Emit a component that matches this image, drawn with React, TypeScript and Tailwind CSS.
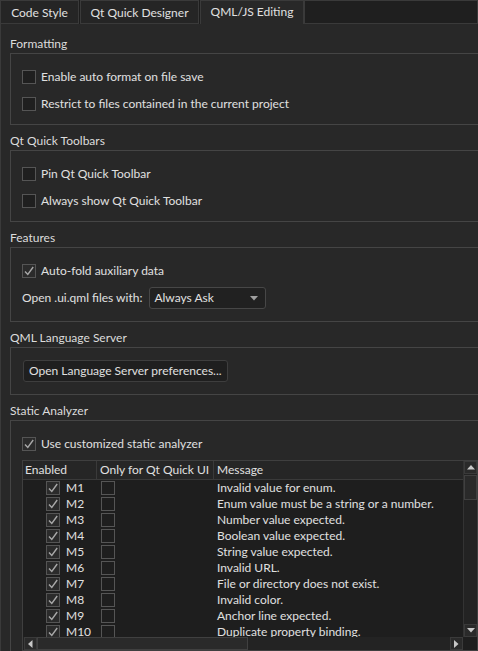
import React from "react";

const Check = ({ checked = false, dim = false }: { checked?: boolean; dim?: boolean }) => (
  <span
    className={`flex h-[14px] w-[14px] shrink-0 items-center justify-center border border-[#555555] ${
      checked ? "bg-[#2b2b2b]" : dim ? "bg-[#1e1e1e]" : "bg-[#1f1f1f]"
    }`}
  >
    {checked && (
      <svg width="12" height="12" viewBox="0 0 12 12">
        <polyline points="2,6.5 4.8,9.5 10.2,2" fill="none" stroke="#a8a8a8" strokeWidth="1.4" />
      </svg>
    )}
  </span>
);

const CheckRow = ({ label, checked = false }: { label: string; checked?: boolean }) => (
  <div className="flex h-[27px] items-center gap-[5px]">
    <Check checked={checked} />
    <span>{label}</span>
  </div>
);

const SectionLabel = ({ children }: { children: React.ReactNode }) => (
  <div className="h-[18px] leading-[18px] text-[#dcdcdc]">{children}</div>
);

const messages = [
  "Invalid value for enum.",
  "Enum value must be a string or a number.",
  "Number value expected.",
  "Boolean value expected.",
  "String value expected.",
  "Invalid URL.",
  "File or directory does not exist.",
  "Invalid color.",
  "Anchor line expected.",
  "Duplicate property binding.",
];

export default function App() {
  return (
    <div className="flex h-[651px] w-[478px] flex-col overflow-hidden bg-[#1d1d1d] font-['Lato',sans-serif] text-[12px] text-[#e0e0e0]">
      {/* Tab bar */}
      <div className="flex h-[24px] shrink-0 items-stretch">
        <div className="flex w-[79px] items-center justify-center border border-[#3a3a3a] bg-[#252525] pt-[1px]">
          Code Style
        </div>
        <div className="ml-[1px] flex w-[119px] items-center justify-center border border-[#3a3a3a] bg-[#252525] pt-[1px]">
          Qt Quick Designer
        </div>
        <div className="ml-[1px] flex w-[104px] items-center justify-center border-x border-t border-[#3a3a3a] bg-[#282828] pb-[1px]">
          QML/JS Editing
        </div>
        <div className="flex-1 border border-[#3a3a3a] bg-[#1f1f1f]" />
      </div>

      {/* Panel */}
      <div className="flex flex-1 flex-col overflow-hidden border-l border-[#3a3a3a] bg-[#282828] pl-[9px] pt-[11px]">
        {/* Formatting */}
        <SectionLabel>Formatting</SectionLabel>
        <div className="border-y border-l border-[#454545] pb-[7px] pl-[11px] pt-[9px]">
          <CheckRow label="Enable auto format on file save" />
          <CheckRow label="Restrict to files contained in the current project" />
        </div>

        {/* Qt Quick Toolbars */}
        <div className="mt-[7px]">
          <SectionLabel>Qt Quick Toolbars</SectionLabel>
          <div className="border-y border-l border-[#454545] pb-[7px] pl-[11px] pt-[9px]">
            <CheckRow label="Pin Qt Quick Toolbar" />
            <CheckRow label="Always show Qt Quick Toolbar" />
          </div>
        </div>

        {/* Features */}
        <div className="mt-[7px]">
          <SectionLabel>Features</SectionLabel>
          <div className="border-y border-l border-[#454545] pb-[9px] pl-[11px] pt-[9px]">
            <CheckRow label="Auto-fold auxiliary data" checked />
            <div className="flex h-[28px] items-center gap-[7px]">
              <span>Open .ui.qml files with:</span>
              <div className="flex h-[22px] w-[117px] items-center justify-between rounded-[3px] border border-[#474747] bg-[#212121] pl-[4px] pr-[7px]">
                <span>Always Ask</span>
                <svg width="8" height="5" viewBox="0 0 8 5">
                  <polygon points="0,0 8,0 4,4.5" fill="#a0a0a0" />
                </svg>
              </div>
            </div>
          </div>
        </div>

        {/* QML Language Server */}
        <div className="mt-[7px]">
          <SectionLabel>QML Language Server</SectionLabel>
          <div className="border-y border-l border-[#454545] pb-[12px] pl-[12px] pt-[12px]">
            <div className="flex h-[22px] w-[205px] items-center rounded-[3px] border border-[#3e3e3e] bg-[#1f1f1f] pl-[5px]">
              Open Language Server preferences...
            </div>
          </div>
        </div>

        {/* Static Analyzer */}
        <div className="mt-[7px]">
          <SectionLabel>Static Analyzer</SectionLabel>
          <div className="border-l border-t border-[#454545] pl-[11px] pt-[9px]">
            <CheckRow label="Use customized static analyzer" checked />
            <div className="mt-[3px] flex h-[191px] w-[456px] flex-col border border-[#3f3f3f] bg-[#1e1e1e]">
              <div className="flex h-[176px]">
                <div className="flex flex-1 flex-col overflow-hidden">
                  {/* header */}
                  <div className="flex h-[19px] shrink-0 border-b border-[#3a3a3a] bg-[#262626] leading-[18px]">
                    <div className="w-[74px] border-r border-[#3a3a3a] pl-[2px]">Enabled</div>
                    <div className="w-[117px] border-r border-[#3a3a3a] pl-[3px]">Only for Qt Quick UI</div>
                    <div className="flex-1 pl-[3px]">Message</div>
                  </div>
                  {messages.map((m, i) => (
                    <div key={m} className="flex h-[16px] shrink-0 items-center leading-[16px]">
                      <div className="flex w-[74px] items-center gap-[6px] pl-[23px]">
                        <Check checked />
                        <span>M{i + 1}</span>
                      </div>
                      <div className="flex w-[117px] items-center pl-[4px]">
                        <Check dim />
                      </div>
                      <div className="flex-1 whitespace-nowrap pl-[3px]">{m}</div>
                    </div>
                  ))}
                </div>
                {/* vertical scrollbar */}
                <div className="flex w-[14px] flex-col border-l border-[#333333] bg-[#232323]">
                  <div className="flex h-[13px] items-center justify-center border border-[#3a3a3a] bg-[#2a2a2a]">
                    <svg width="8" height="5" viewBox="0 0 8 5">
                      <polygon points="0,4.5 8,4.5 4,0" fill="#c8c8c8" />
                    </svg>
                  </div>
                  <div className="mt-[1px] h-[25px] border border-[#404040] bg-[#2a2a2a]" />
                  <div className="flex-1" />
                  <div className="flex h-[13px] items-center justify-center border border-[#3a3a3a] bg-[#2a2a2a]">
                    <svg width="8" height="5" viewBox="0 0 8 5">
                      <polygon points="0,0 8,0 4,4.5" fill="#c8c8c8" />
                    </svg>
                  </div>
                </div>
              </div>
              {/* horizontal scrollbar */}
              <div className="flex h-[13px]">
                <div className="flex flex-1 items-stretch bg-[#232323] pl-[1px]">
                  <div className="flex w-[13px] items-center justify-center border border-[#3a3a3a] bg-[#2a2a2a]">
                    <svg width="5" height="8" viewBox="0 0 5 8">
                      <polygon points="4.5,0 4.5,8 0,4" fill="#c8c8c8" />
                    </svg>
                  </div>
                  <div className="w-[211px] border border-[#404040] bg-[#2a2a2a]" />
                  <div className="flex-1" />
                  <div className="flex w-[13px] items-center justify-center border border-[#3a3a3a] bg-[#2a2a2a]">
                    <svg width="5" height="8" viewBox="0 0 5 8">
                      <polygon points="0,0 0,8 4.5,4" fill="#c8c8c8" />
                    </svg>
                  </div>
                </div>
                <div className="w-[14px] bg-[#1e1e1e]" />
              </div>
            </div>
          </div>
        </div>
      </div>
    </div>
  );
}
